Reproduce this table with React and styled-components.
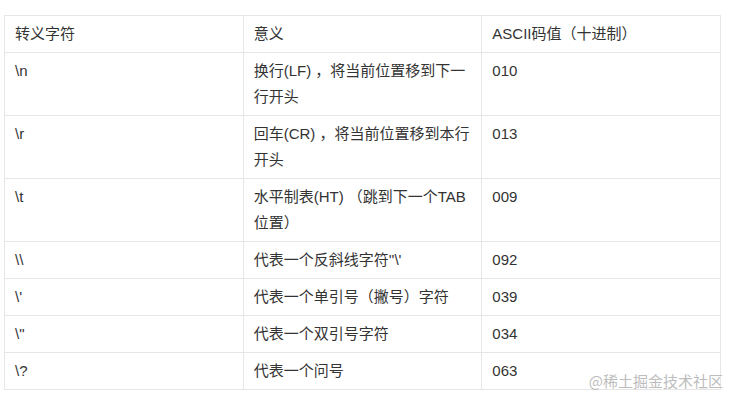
import React from 'react';
import styled, {createGlobalStyle} from 'styled-components';

const GlobalStyle = createGlobalStyle`
  html, body {
    margin: 0;
    padding: 0;
    background: #ffffff;
  }
  body {
    font-family: "Liberation Sans", "Noto Sans CJK SC", sans-serif;
    color: #333333;
  }
`

const Page = styled.div`
  position: relative;
  width: 730px;
  height: 403px;
  padding: 15px 0 0 4px;
  box-sizing: border-box;
  background: #ffffff;
`

const Table = styled.table`
  width: 717px;
  border-collapse: collapse;
  table-layout: fixed;
  font-size: 15px;
  line-height: 26px;
`

const Cell = styled.td`
  border: 1px solid #e6e6e6;
  padding: 5px 10px;
  vertical-align: top;
  text-align: left;
  font-weight: normal;
  color: #333333;
  word-break: break-all;
`

const Watermark = styled.div`
  position: absolute;
  right: 7px;
  top: 371px;
  font-family: "Noto Sans CJK SC", sans-serif;
  font-size: 15px;
  line-height: 20px;
  color: #bdbdbd;
  letter-spacing: 0;
`

const rows = [
  ['\\n', '换行(LF) ，将当前位置移到下一行开头', '010'],
  ['\\r', '回车(CR) ，将当前位置移到本行开头', '013'],
  ['\\t', '水平制表(HT) （跳到下一个TAB位置）', '009'],
  ['\\\\', "代表一个反斜线字符''\\'", '092'],
  ["\\'", '代表一个单引号（撇号）字符', '039'],
  ['\\"', '代表一个双引号字符', '034'],
  ['\\?', '代表一个问号', '063'],
]

export default function App() {
  return (
    <>
      <GlobalStyle />
      <Page>
        <Table>
          <thead>
            <tr>
              <Cell as="th">转义字符</Cell>
              <Cell as="th">意义</Cell>
              <Cell as="th">ASCII码值（十进制）</Cell>
            </tr>
          </thead>
          <tbody>
            {rows.map((r, i) => (
              <tr key={i}>
                <Cell>{r[0]}</Cell>
                <Cell>{r[1]}</Cell>
                <Cell>{r[2]}</Cell>
              </tr>
            ))}
          </tbody>
        </Table>
        <Watermark>@稀土掘金技术社区</Watermark>
      </Page>
    </>
  )
}
